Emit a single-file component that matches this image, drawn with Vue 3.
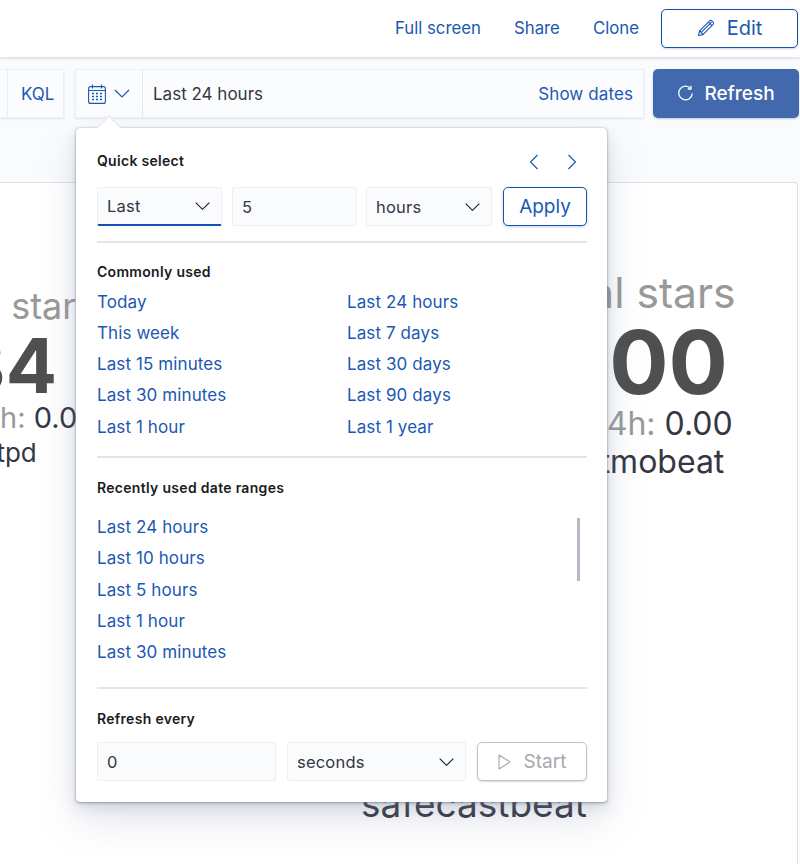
<script setup>
const common = [
  ['Today', 'Last 24 hours'],
  ['This week', 'Last 7 days'],
  ['Last 15 minutes', 'Last 30 days'],
  ['Last 30 minutes', 'Last 90 days'],
  ['Last 1 hour', 'Last 1 year'],
]
const recent = ['Last 24 hours', 'Last 10 hours', 'Last 5 hours', 'Last 1 hour', 'Last 30 minutes']
</script>

<template>
  <div class="page">
    <header class="topbar">
      <a class="navlink">Full screen</a>
      <a class="navlink">Share</a>
      <a class="navlink">Clone</a>
      <button class="edit">
        <svg width="18" height="18" viewBox="0 0 18 18" fill="none" stroke="currentColor" stroke-width="1.1" stroke-linejoin="round">
          <path d="M1.5 16.5l.9-4.4L12.6 1.9a1.6 1.6 0 0 1 2.3 0l1.2 1.2a1.6 1.6 0 0 1 0 2.3L5.9 15.6z" />
          <path d="M2.4 12.1c1.2 0 1.5.3 1.6 1.6 1.3.1 1.8.5 1.9 1.9M4 13.7L14.6 3.1M11.4 3.1l3.5 3.5" />
        </svg>
        <span>Edit</span>
      </button>
    </header>

    <div class="toolbar">
      <div class="query"><span class="kql">KQL</span></div>
      <div class="datebox">
        <div class="datebtn">
          <svg width="18" height="20" viewBox="0 0 18 20" fill="none" stroke="currentColor" stroke-width="1.1">
            <rect x="0.6" y="2.6" width="16.8" height="16.8" rx="2" />
            <path d="M.6 6.5h16.8M4.5 .5v4M13.5 .5v4" />
            <path d="M4 9.5h2M8 9.5h2M12 9.5h2M4 12.5h2M8 12.5h2M12 12.5h2M4 15.5h2M8 15.5h2M12 15.5h2" stroke-width="1.3" />
          </svg>
          <svg width="16" height="9" viewBox="0 0 16 9" fill="none" stroke="currentColor" stroke-width="1.2"><path d="M1 1l7 7 7-7" /></svg>
        </div>
        <span class="range">Last 24 hours</span>
        <a class="showdates">Show dates</a>
      </div>
      <button class="refresh">
        <svg width="17" height="17" viewBox="0 0 17 17" fill="none" stroke="currentColor" stroke-width="1.3">
          <path d="M13.7 3.6A6.8 6.8 0 1 0 15.3 8.5" />
          <path d="M13.9 .8v3.2h-3.2" />
        </svg>
        <span>Refresh</span>
      </button>
    </div>

    <main class="dash">
      <div class="tiles">
        <section class="tile left">
          <div class="label s1">Total stars</div>
          <div class="big s7">34</div>
          <div class="sub s2"><span class="muted">Last 24h: </span>0.00</div>
          <div class="name s8">httpd</div>
        </section>
        <section class="tile right">
          <div class="label s3">Total stars</div>
          <div class="big s4">1,000.00</div>
          <div class="sub s5"><span class="muted">Last 24h: </span>0.00</div>
          <div class="name s6">atmobeat</div>
        </section>
      </div>
      <div class="beat">safecastbeat</div>
    </main>

    <div class="pop-arrow"></div>
    <div class="popover">
      <div class="qs-head">
        <h4>Quick select</h4>
        <div class="arrows">
          <svg width="10" height="16" viewBox="0 0 10 16" fill="none" stroke="currentColor" stroke-width="1.2"><path d="M8.5 1L1.5 8l7 7" /></svg>
          <svg width="10" height="16" viewBox="0 0 10 16" fill="none" stroke="currentColor" stroke-width="1.2"><path d="M1.5 1l7 7-7 7" /></svg>
        </div>
      </div>
      <div class="qs-row">
        <div class="field sel w-last active">
          <span>Last</span>
          <svg class="chev" width="15" height="8" viewBox="0 0 15 8" fill="none" stroke="currentColor" stroke-width="1.1"><path d="M.7 .7l6.8 6.6L14.3 .7" /></svg>
        </div>
        <div class="field w-num"><span>5</span></div>
        <div class="field sel w-unit">
          <span>hours</span>
          <svg class="chev" width="15" height="8" viewBox="0 0 15 8" fill="none" stroke="currentColor" stroke-width="1.1"><path d="M.7 .7l6.8 6.6L14.3 .7" /></svg>
        </div>
        <button class="apply">Apply</button>
      </div>
      <hr class="rule first" />

      <h4 class="section s-first">Commonly used</h4>
      <div class="common">
        <template v-for="row in common" :key="row[0]">
          <a class="plink">{{ row[0] }}</a>
          <a class="plink">{{ row[1] }}</a>
        </template>
      </div>
      <hr class="rule second" />

      <h4 class="section">Recently used date ranges</h4>
      <div class="recent">
        <a v-for="item in recent" :key="item" class="plink">{{ item }}</a>
        <div class="scrollthumb"></div>
      </div>
      <hr class="rule third" />

      <h4 class="section">Refresh every</h4>
      <div class="rf-row">
        <div class="field w-rnum"><span>0</span></div>
        <div class="field sel w-sec">
          <span>seconds</span>
          <svg class="chev" width="15" height="8" viewBox="0 0 15 8" fill="none" stroke="currentColor" stroke-width="1.1"><path d="M.7 .7l6.8 6.6L14.3 .7" /></svg>
        </div>
        <button class="start">
          <svg width="13" height="16" viewBox="0 0 13 16" fill="none" stroke="currentColor" stroke-width="1.1" stroke-linejoin="round"><path d="M1 1l11 7-11 7z" /></svg>
          <span>Start</span>
        </button>
      </div>
    </div>
  </div>
</template>

<style>
html, body { margin: 0; background: #fafbfd; }
</style>

<style scoped>
* { box-sizing: border-box; }
.page {
  position: relative;
  width: 800px;
  height: 864px;
  overflow: hidden;
  background: #fafbfd;
  font-family: Inter, "Noto Sans", sans-serif;
  color: #1a1c21;
}
.topbar {
  height: 57px;
  background: #fff;
  display: flex;
  align-items: center;
  justify-content: flex-end;
  padding: 0 2px 1px 0;
  box-shadow: 0 1px 3px rgba(120, 130, 160, .35);
  position: relative;
}
.navlink { font-size: 16.8px; color: #1b58b4; margin-right: 33px; }
.navlink:nth-child(3) { margin-right: 22px; }
button { font-family: inherit; margin: 0; cursor: pointer; }
.edit {
  width: 137px;
  height: 39px;
  border: 1px solid #0f54b4;
  border-radius: 5px;
  background: #fff;
  color: #1b58b4;
  font-size: 20px;
  display: flex;
  align-items: center;
  justify-content: center;
  gap: 12px;
  box-shadow: 0 1px 2px rgba(100, 110, 140, .3);
}
.toolbar {
  display: flex;
  height: 49px;
  margin-top: 12px;
}
.query {
  width: 64px;
  background: #fbfcfe;
  border: 1px solid #eef0f5;
  border-left: none;
  box-shadow: 0 1px 2px rgba(150, 160, 185, .25);
  display: flex;
  align-items: center;
  padding-left: 7px;
}
.kql {
  border-left: 1px solid #e9ecf2;
  height: 100%;
  padding-left: 13px;
  display: flex;
  align-items: center;
  color: #1b58b4;
  font-size: 17px;
}
.datebox {
  width: 569px;
  margin-left: 11px;
  background: #fbfcfe;
  border: 1px solid #eef0f5;
  box-shadow: 0 1px 2px rgba(150, 160, 185, .25);
  display: flex;
  align-items: center;
  font-size: 17px;
}
.datebtn {
  width: 67px;
  height: 100%;
  border-right: 1px solid #e3e7ef;
  color: #1b58b4;
  display: flex;
  align-items: center;
  gap: 8px;
  padding-left: 12px;
}
.range { margin-left: 10px; color: #343741; flex: 1; }
.showdates { color: #1b58b4; margin-right: 10px; letter-spacing: .1px; }
.refresh {
  width: 146px;
  margin-left: 9px;
  border: none;
  border-radius: 5px;
  background: #4268ae;
  color: #fff;
  font-size: 19px;
  font-weight: 500;
  display: flex;
  align-items: center;
  justify-content: center;
  gap: 10px;
  box-shadow: 0 1px 2px rgba(60, 80, 130, .3);
}
.dash {
  margin: 64px 2px 0 0;
  height: 700px;
  background: #fff;
  border: 1px solid #dde1ea;
  border-left: none;
  border-radius: 0 4px 4px 0;
  overflow: hidden;
  color: #343741;
}
.tiles { display: flex; margin: 88px 0 0 -315px; }
.tile { width: 630px; flex: none; text-align: center; }
.label { font-size: 42.6px; line-height: 44px; color: #999; }
.big { font-size: 88px; line-height: 87px; font-weight: 700; color: #4f4f4f; margin-top: 4px; white-space: nowrap; }
.sub { font-size: 32px; line-height: 36px; }
.muted { color: #999; }
.name { font-size: 32px; line-height: 38px; margin-top: 1px; }
.s1 { font-size: 36px; margin-top: 13px; padding-left: 13px; }
.s2 { font-size: 29px; margin-top: -9px; padding-right: 6px; }
.s3 { padding-left: 2px; }
.s4 { padding-right: 190px; }
.s5 { padding-right: 12px; }
.s6 { padding-left: 46px; }
.s7 { font-size: 76px; margin-top: -6px; padding-left: 14px; }
.s8 { font-size: 26px; margin-top: -2px; padding-left: 10px; }
.beat { font-size: 37px; line-height: 44px; width: 948px; text-align: center; margin-top: 301px; }

.pop-arrow {
  position: absolute;
  left: 100px;
  top: 119px;
  width: 18px;
  height: 18px;
  background: #fff;
  transform: rotate(45deg);
  border-left: 1px solid #dfe3ec;
  border-top: 1px solid #dfe3ec;
  z-index: 3;
}
.popover {
  position: absolute;
  left: 76px;
  top: 128px;
  width: 531px;
  height: 674px;
  padding: 0 20px 0 21px;
  background: #fff;
  border-radius: 4px;
  z-index: 2;
  box-shadow: 0 0 1px rgba(90, 100, 130, .7), 0 1px 3px rgba(90, 100, 130, .55), 0 6px 14px rgba(120, 130, 160, .22), 0 18px 40px rgba(120, 130, 160, .2);
}
h4 { margin: 0; font-size: 14px; line-height: 18px; font-weight: 600; color: #1a1c21; letter-spacing: .3px; }
.qs-head { display: flex; justify-content: space-between; align-items: flex-start; padding-top: 24px; height: 59px; }
.arrows { display: flex; gap: 28px; color: #1b58b4; padding-right: 10px; margin-top: 2px; }
.qs-row { display: flex; }
.field {
  height: 39px;
  background: #fafbfd;
  border: 1px solid #eef0f5;
  display: flex;
  align-items: center;
  justify-content: space-between;
  padding: 0 9px;
  font-size: 16.5px;
  letter-spacing: .2px;
  color: #343741;
  border-radius: 2px;
}
.chev { color: #1a1c21; margin-right: 2px; }
.field.active { border-bottom: 2px solid #0f54b4; }
.w-last { width: 125px; }
.w-num { width: 125px; margin-left: 10px; }
.w-unit { width: 126px; margin-left: 9px; }
.apply {
  width: 84px;
  height: 39px;
  margin-left: 11px;
  border: 1px solid #0f54b4;
  border-radius: 5px;
  background: #fff;
  color: #1b58b4;
  font-size: 19px;
  box-shadow: 0 1px 3px rgba(100, 110, 140, .35);
}
.rule { border: none; height: 2px; background: #e0e4ed; margin: 0; }
.rule.first { margin-top: 15px; }
.rule.second { margin-top: 13.5px; }
.rule.third { margin-top: 0; }
.section { margin-top: 21px; }
.section.s-first { margin-top: 20px; }
.common {
  display: grid;
  grid-template-columns: 250px 1fr;
  grid-auto-rows: 31.25px;
  margin-top: 5.5px;
}
.plink { color: #1b58b4; font-size: 17px; letter-spacing: .1px; line-height: 31.25px; display: block; }
.recent { position: relative; margin-top: 14.5px; padding-bottom: 18.5px; }
.recent .plink { line-height: 31.4px; }
.scrollthumb {
  position: absolute;
  right: 7px;
  top: 6.5px;
  width: 3px;
  height: 63px;
  background: #b6b9c4;
}
.rf-row { display: flex; margin-top: 14px; }
.w-rnum { width: 179px; }
.w-sec { width: 179px; margin-left: 11px; }
.start {
  width: 110px;
  height: 39px;
  margin-left: 11px;
  border: 1px solid #c2c3c6;
  border-radius: 5px;
  background: #fff;
  color: #a7a9ad;
  font-size: 19px;
  display: flex;
  align-items: center;
  justify-content: center;
  gap: 13px;
  box-shadow: 0 1px 2px rgba(100, 110, 140, .25);
}
</style>
